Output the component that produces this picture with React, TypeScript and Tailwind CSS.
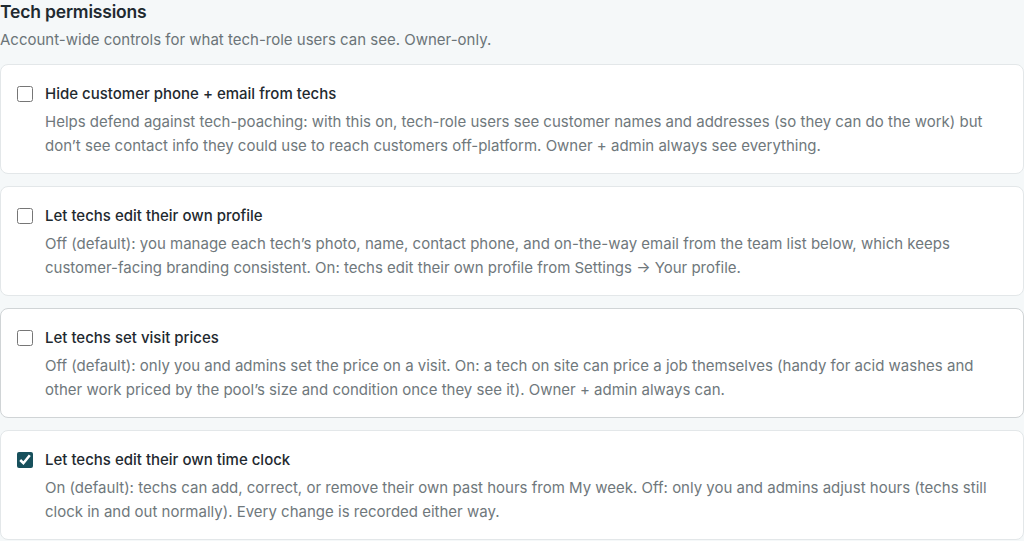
import { useState } from 'react'

type Perm = {
  key: string
  title: string
  body: string
  on: boolean
}

const perms: Perm[] = [
  {
    key: 'hideContact',
    title: 'Hide customer phone + email from techs',
    body: 'Helps defend against tech-poaching: with this on, tech-role users see customer names and addresses (so they can do the work) but don\u2019t see contact info they could use to reach customers off-platform. Owner + admin always see everything.',
    on: false,
  },
  {
    key: 'editProfile',
    title: 'Let techs edit their own profile',
    body: 'Off (default): you manage each tech\u2019s photo, name, contact phone, and on-the-way email from the team list below, which keeps customer-facing branding consistent. On: techs edit their own profile from Settings \u2192 Your profile.',
    on: false,
  },
  {
    key: 'setPrices',
    title: 'Let techs set visit prices',
    body: 'Off (default): only you and admins set the price on a visit. On: a tech on site can price a job themselves (handy for acid washes and other work priced by the pool\u2019s size and condition once they see it). Owner + admin always can.',
    on: false,
  },
  {
    key: 'timeClock',
    title: 'Let techs edit their own time clock',
    body: 'On (default): techs can add, correct, or remove their own past hours from My week. Off: only you and admins adjust hours (techs still clock in and out normally). Every change is recorded either way.',
    on: true,
  },
]

export default function App() {
  const [state, setState] = useState<Record<string, boolean>>(() =>
    Object.fromEntries(perms.map((p) => [p.key, p.on]))
  )

  return (
    <div className="min-h-screen bg-[#f5f8f9] font-['Inter',sans-serif] text-[#1f2a30]">
      <h2 className="text-[17.5px] font-semibold leading-[24px] tracking-[-0.01em]">
        Tech permissions
      </h2>
      <p className="mt-[4px] text-[15px] leading-[24px] text-[#6b7478]">
        Account-wide controls for what tech-role users can see. Owner-only.
      </p>

      <div className="mt-[12px] flex flex-col gap-[12px]">
        {perms.map((p, i) => (
          <label
            key={p.key}
            className={`flex h-[110px] cursor-pointer gap-[12px] rounded-[8px] border bg-white pl-[16px] pr-[36px] pt-[18px] ${
              i === 2 ? 'border-[#d0d4d6]' : 'border-[#e3e7e9]'
            }`}
          >
            <input
              type="checkbox"
              checked={state[p.key]}
              onChange={(e) => setState({ ...state, [p.key]: e.target.checked })}
              className="mt-[3px] h-[16px] w-[16px] shrink-0 accent-[#17505c]"
            />
            <div className="min-w-0">
              <div className="text-[15px] font-medium leading-[22px] text-[#1f2a30]">
                {p.title}
              </div>
              <p className="mt-[5px] text-[15px] leading-[24px] text-[#6f787c]">
                {p.body}
              </p>
            </div>
          </label>
        ))}
      </div>
    </div>
  )
}
